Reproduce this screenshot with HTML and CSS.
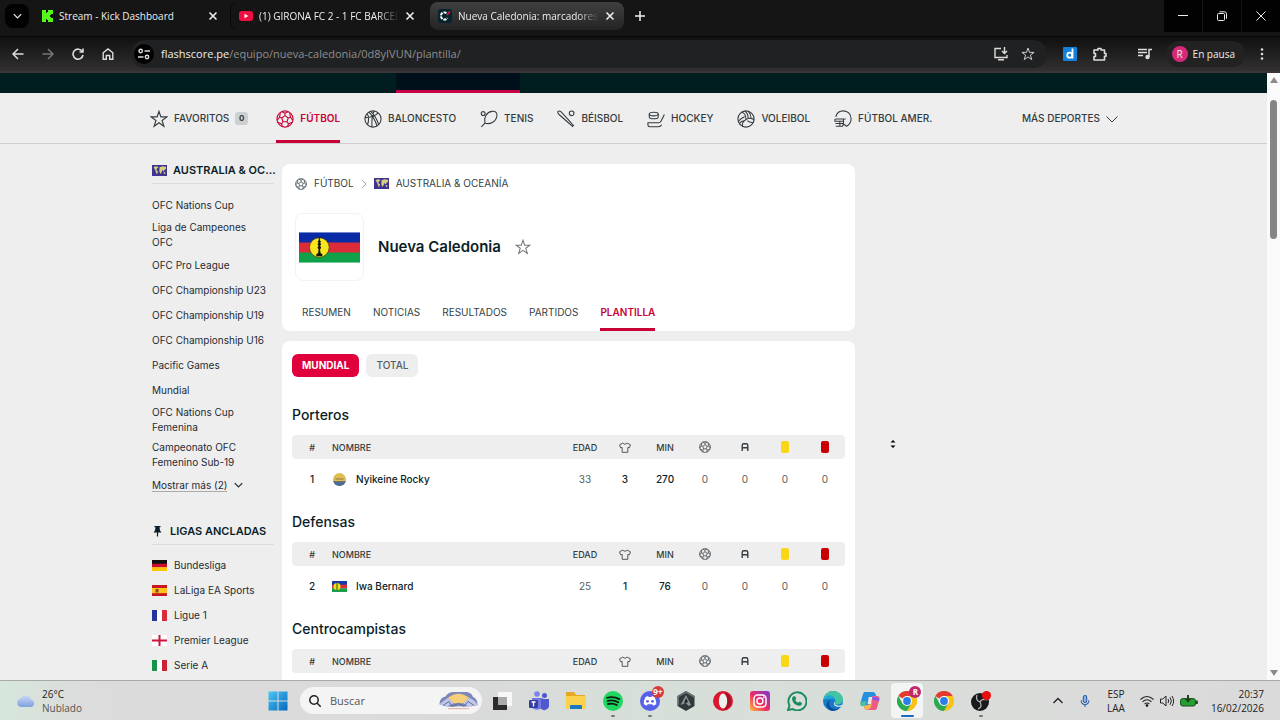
FILE: index.html
```html
<!DOCTYPE html>
<html lang="es">
<head>
<meta charset="utf-8">
<title>Nueva Caledonia: marcadores en directo</title>
<link rel="stylesheet" href="styles.css">
</head>
<body>
<svg class="defs" aria-hidden="true">
  <symbol id="ball" viewBox="0 0 20 20"><g fill="none" stroke="currentColor" stroke-width="1.2" stroke-linejoin="round"><circle cx="10" cy="10" r="9"/><path d="M10 6.300l3.600 2.600-1.400 4.200H7.800L6.400 8.900zM10 6.300V3.700M13.600 8.900l2.500-.8M12.200 13.100l1.600 2.200M7.800 13.100l-1.600 2.200M6.400 8.900l-2.500-.8M6.500 1.900L10 3.700l3.500-1.800M18.700 11.600l-2.600-3.500-.9-4.700M18.300 13.500l-4.500 1.800-1 3.300M7.200 18.600l-1-3.300-4.500-1.800M1.300 11.600l2.600-3.500.900-4.700"/></g></symbol>
  <symbol id="basket" viewBox="0 0 20 20"><g fill="none" stroke="currentColor" stroke-width="1.2"><circle cx="10" cy="10" r="9"/><path d="M5.500 2.300C9 6 12.500 11 14.500 17.800M7.500 1.500C11 5 14.500 10 16.300 16.300M1.200 8.500C7 8.500 12.500 6.500 15.800 3.200M11.300 1.300C9.500 4 8.500 10 8.800 18.800M3.500 4.200c1.800 2.500 2.300 6.500.4 12.300"/></g></symbol>
  <symbol id="tennis" viewBox="0 0 20 20"><g fill="none" stroke="currentColor" stroke-width="1.200"><circle cx="3.500" cy="4" r="2.200"/><path d="M5.500 14.500C3.800 9 7 2.500 13 1.500c4.500-.7 6.500 2 5.700 6C17.500 13 11 16.500 5.500 14.500zM5.500 14.500L1.500 18.700"/></g></symbol>
  <symbol id="bat" viewBox="0 0 20 20"><g fill="none" stroke="currentColor" stroke-width="1.200" stroke-linejoin="round"><circle cx="16.300" cy="3.700" r="2.600"/><path d="M1.300 1.500c1-.8 2.200-.4 3.300.6l8.200 8.900 5.300 6.200-.8.900-6.200-5.300L2 4.700C.9 3.500.6 2.300 1.300 1.500zM18.700 16.500l-2 2.200"/></g></symbol>
  <symbol id="hockey" viewBox="0 0 20 20"><g fill="none" stroke="currentColor" stroke-width="1.200" stroke-linejoin="round"><ellipse cx="7.500" cy="4.500" rx="5" ry="2"/><path d="M2.500 4.500v3.200c0 2.700 10 2.700 10 0V4.500M19.300 5l-3.800 7.500c-.6 1.200-1.300 1.700-2.600 1.700H1v2.300C1 18 2 18.700 3 18.700h9.500c2 0 3-.6 3.800-2.200"/></g></symbol>
  <symbol id="volley" viewBox="0 0 20 20"><g fill="none" stroke="currentColor" stroke-width="1.200"><circle cx="10" cy="10" r="9"/><path d="M10 10.500c0-4-2-7.500-5.300-8.300M10 10.500c3.500-2 8-1.500 9 1M10 10.500c-3.500 2-5 5.500-3.500 8M12.300 9.600c.2-3.500-1-6.800-3.800-8.500M11.500 12c3 2 5.500 2 7 1.500M7.500 12c-2.800 1-4.800 2.500-5 4M15.500 9c0-3-1-5.500-3-7.800M8.500 7.500C5 9 2 11.500 1.500 13.500"/></g></symbol>
  <symbol id="helmet" viewBox="0 0 20 20"><g fill="none" stroke="currentColor" stroke-width="1.200" stroke-linejoin="round"><path d="M2 7.500C3 3.500 6.500 1 10.500 1c5 0 8.500 4 8.500 8.800 0 3.700-2 6.700-5 8.200l-3.500-2.500V10H1.500M1 10v2.500h9.500M1.500 15h9M2 18h7.500l1-2.500M6.500 12.500V18M13 10h-2.500"/></g></symbol>
  <symbol id="star" viewBox="0 0 20 20"><path d="M10 1.500l2.100 6.200h6.600l-5.300 3.900 2 6.400L10 14.200 4.600 18l2-6.400L1.300 7.700h6.600z" fill="none" stroke="currentColor" stroke-width="1.300"/></symbol>
  <symbol id="shirt" viewBox="0 0 20 18"><path d="M6.500 1.500L1 4.500l1.500 4.800L5.300 9v8h9.400V9l2.800.3L19 4.500l-5.500-3c-1 2.700-6 2.700-7 0z" fill="none" stroke="currentColor" stroke-width="1.400" stroke-linejoin="round"/></symbol>
  <symbol id="assist" viewBox="0 0 10 10"><path d="M1.500 10V3c0-1.300.6-2 2-2h3c1.400 0 2 .7 2 2v7M1.500 6h7" fill="none" stroke="currentColor" stroke-width="1.700"/></symbol>
  <symbol id="x" viewBox="0 0 10 10"><path d="M1.500 1.500l7 7M8.500 1.500l-7 7" fill="none" stroke="currentColor" stroke-width="1.600"/></symbol>
  <symbol id="down" viewBox="0 0 12 8"><path d="M1 1.500l5 5 5-5" fill="none" stroke="currentColor" stroke-width="1.600"/></symbol>
  <symbol id="world" viewBox="0 0 15 11"><path fill="#3f3394" d="M0 0h15v11H0z"/><path fill="#d8cf7a" d="M1.500 2l3-.7 2 .7L5 3.500 4.300 5 6 6.500 5 9.500l-1-2L3.200 5zM7.500 2.300l3-1 3.400.5.300 1.700-1.700 1.500-1 1.500-1.300-1.500-.7 2.500-1 1.500-1.300-3L7.500 4.500zM11.700 7l1.500.2.300 1.500h-1.700z"/></symbol>
  <symbol id="nc" viewBox="0 0 60 30"><path fill="#0a2ba6" d="M0 0h60v11H0z"/><path fill="#dd2c39" d="M0 10h60v11H0z"/><path fill="#0fa04a" d="M0 20h60v10H0z"/><circle cx="20" cy="15" r="9.700" fill="#f7e51d" stroke="#2b2a14" stroke-width=".6"/><path fill="#15180f" d="M19.600 5h.8l.3 3 1 1.300-.9 1 1 1.500-1 1.500 1 2-1.100 1.700.5 3.300 1.800 1.300v2h-6v-2l1.800-1.300.5-3.300-1.100-1.700 1-2-1-1.500 1-1.500-.9-1 1-1.300z"/></symbol>
  <symbol id="chrome" viewBox="0 0 20 20"><path fill="#e33b2e" d="M1.300 5A10 10 0 0118.700 5H10v5z"/><path fill="#fbc116" d="M18.700 5A10 10 0 0110 20l4.300-7.500L10 5z"/><path fill="#2da94f" d="M1.300 5A10 10 0 0010 20l4.300-7.500H5.700z"/><circle cx="10" cy="10" r="5" fill="#fff"/><circle cx="10" cy="10" r="3.900" fill="#2b7de9"/></symbol>
</svg>

<header class="tabstrip">
  <button class="tab-search" aria-label="Buscar pestañas"><svg class="chev"><use href="#down"/></svg></button>
  <div class="tab">
    <svg class="i12" viewBox="0 0 12 12"><path fill="#53fc18" d="M1 0h4v3h1V2h1V0h5v4h-2v1H9v2h1v1h2v4H7v-2H6V9H5v3H1z"/></svg>
    <span class="tab-title">Stream - Kick Dashboard</span>
    <button class="close" aria-label="Cerrar"><svg class="i10"><use href="#x"/></svg></button>
  </div>
  <div class="tab divided">
    <svg class="i14" viewBox="0 0 14 14"><rect y="2" width="14" height="10" rx="3" fill="#f0103f"/><path fill="#fff" d="M5.500 4.800L9.300 7 5.500 9.200z"/></svg>
    <span class="tab-title fade">(1) GIRONA FC 2 - 1 FC BARCEL</span>
    <button class="close" aria-label="Cerrar"><svg class="i10"><use href="#x"/></svg></button>
  </div>
  <div class="tab active">
    <svg class="i14" viewBox="0 0 14 14"><rect width="14" height="14" rx="3" fill="#06242b"/><path d="M8.500 4A3.600 3.600 0 109.500 9" fill="none" stroke="#fff" stroke-width="2" stroke-dasharray="3 1"/><path d="M9 6l3-3.500" stroke="#f0104f" stroke-width="1.500"/></svg>
    <span class="tab-title fade">Nueva Caledonia: marcadores e</span>
    <button class="close" aria-label="Cerrar"><svg class="i10"><use href="#x"/></svg></button>
  </div>
  <button class="new-tab" aria-label="Nueva pestaña"><svg class="i10" viewBox="0 0 10 10"><path d="M5 0v10M0 5h10" stroke="currentColor" stroke-width="1.500"/></svg></button>
  <div class="window-buttons">
    <button aria-label="Minimizar"><svg class="i10" viewBox="0 0 10 10"><path d="M0 4.500h10" stroke="currentColor"/></svg></button>
    <button aria-label="Restaurar"><svg class="i10" viewBox="0 0 10 10"><path d="M.5 3.500q0-1 1-1h5q1 0 1 1v5q0 1-1 1h-5q-1 0-1-1zM2.500.8h5q2 0 2 2v5" fill="none" stroke="currentColor"/></svg></button>
    <button aria-label="Cerrar ventana"><svg class="i10" viewBox="0 0 10 10"><path d="M.5.500l9 9M9.500.500l-9 9" stroke="currentColor"/></svg></button>
  </div>
</header>

<nav class="toolbar" aria-label="Navegador">
  <div class="nav-buttons">
    <button aria-label="Atrás"><svg class="i12" viewBox="0 0 12 12"><path d="M11.500 6H1M6 1L1 6l5 5" fill="none" stroke="currentColor" stroke-width="1.500"/></svg></button>
    <button class="dim" aria-label="Adelante"><svg class="i12" viewBox="0 0 12 12"><path d="M.5 6H11M6 1l5 5-5 5" fill="none" stroke="currentColor" stroke-width="1.500"/></svg></button>
    <button aria-label="Recargar"><svg class="i12" viewBox="0 0 12 12"><path d="M10.300 3.500A5 5 0 1011 7M11 .5V4H7.500" fill="none" stroke="currentColor" stroke-width="1.600"/></svg></button>
    <button aria-label="Inicio"><svg class="i12" viewBox="0 0 12 12"><path d="M1.200 4.800L6 1l4.800 3.800v6.500H7.700V7.500H4.300v3.800H1.200z" fill="none" stroke="currentColor" stroke-width="1.400"/></svg></button>
  </div>
  <div class="omnibox">
    <button class="site-info" aria-label="Información del sitio"><svg class="i12" viewBox="0 0 12 12"><g fill="none" stroke="currentColor" stroke-width="1.400"><circle cx="2.700" cy="3" r="1.700"/><path d="M6.500 3H12M0 9h5.500"/><circle cx="9" cy="9" r="1.700"/></g></svg></button>
    <div class="url">flashscore.pe<span>/equipo/nueva-caledonia/0d8yIVUN/plantilla/</span></div>
    <button aria-label="Instalar"><svg class="i14" viewBox="0 0 14 14"><path d="M7 1.500H1v9h12V8M4 12.700h6M10.500 0v6M8 4l2.500 2.500L13 4" fill="none" stroke="currentColor" stroke-width="1.400"/></svg></button>
    <button aria-label="Marcar página"><svg class="i14"><use href="#star"/></svg></button>
  </div>
  <div class="extensions">
    <button aria-label="Extensión d"><svg class="i14" viewBox="0 0 14 14"><rect width="14" height="14" rx="1" fill="#1480dd"/><circle cx="6.700" cy="8.200" r="2.500" fill="none" stroke="#fff" stroke-width="1.800"/><path d="M9.500 1.500v10" stroke="#fff" stroke-width="1.800"/></svg></button>
    <button aria-label="Extensiones"><svg class="i14" viewBox="0 0 14 14"><path d="M1 3h4V1.500h3V3h3.500v3.500H13v2.700h-1.500V13H1V9.500h1.500v-3H1z" fill="none" stroke="currentColor" stroke-width="1.600" stroke-linejoin="round"/></svg></button>
    <button class="media" aria-label="Multimedia"><svg class="i14" viewBox="0 0 14 14"><path d="M0 2.500h9M0 5.500h9M0 8.500h5M11 10V2.500h3" fill="none" stroke="currentColor" stroke-width="1.500"/><circle cx="9.500" cy="10" r="2.200" fill="currentColor"/></svg></button>
    <button class="profile"><span class="avatar">R</span>En pausa</button>
    <button aria-label="Menú"><svg class="i14" viewBox="0 0 14 14" fill="currentColor"><circle cx="7" cy="2.500" r="1.300"/><circle cx="7" cy="7" r="1.300"/><circle cx="7" cy="11.500" r="1.300"/></svg></button>
  </div>
</nav>

<div class="viewport">
  <div class="page">
    <div class="site-header"><div class="site-tab"></div></div>
    <nav class="sports" aria-label="Deportes">
      <div class="sports-inner">
        <a href="#" class="favorites"><svg class="i18"><use href="#star"/></svg>FAVORITOS<span class="count">0</span></a>
        <a href="#" class="current"><svg class="i18"><use href="#ball"/></svg>FÚTBOL</a>
        <a href="#"><svg class="i18"><use href="#basket"/></svg>BALONCESTO</a>
        <a href="#"><svg class="i18"><use href="#tennis"/></svg>TENIS</a>
        <a href="#"><svg class="i18"><use href="#bat"/></svg>BÉISBOL</a>
        <a href="#"><svg class="i18"><use href="#hockey"/></svg>HOCKEY</a>
        <a href="#"><svg class="i18"><use href="#volley"/></svg>VOLEIBOL</a>
        <a href="#"><svg class="i18"><use href="#helmet"/></svg>FÚTBOL AMER.</a>
        <button class="more-sports">MÁS DEPORTES<svg class="i12" viewBox="0 0 12 12"><path d="M.5 3.500L6 9l5.500-5.500" fill="none" stroke="currentColor"/></svg></button>
      </div>
    </nav>
    <div class="columns">
      <aside class="sidebar">
        <h2><svg class="flag"><use href="#world"/></svg>AUSTRALIA &amp; OC...</h2>
        <ul class="leagues">
          <li><a href="#">OFC Nations Cup</a></li>
          <li><a href="#">Liga de Campeones<br>OFC</a></li>
          <li><a href="#">OFC Pro League</a></li>
          <li><a href="#">OFC Championship U23</a></li>
          <li><a href="#">OFC Championship U19</a></li>
          <li><a href="#">OFC Championship U16</a></li>
          <li><a href="#">Pacific Games</a></li>
          <li><a href="#">Mundial</a></li>
          <li><a href="#">OFC Nations Cup<br>Femenina</a></li>
          <li><a href="#">Campeonato OFC<br>Femenino Sub-19</a></li>
          <li><button class="show-more"><span>Mostrar más (2)</span><svg class="chev"><use href="#down"/></svg></button></li>
        </ul>
        <h2 class="pinned"><svg class="pin" viewBox="0 0 10 12"><path fill="currentColor" d="M2 1h6v1.300H7L7.500 5.500l1.500 2H5.600V11.500H4.400V7.500H1l1.500-2L3 2.300H2z"/></svg>LIGAS ANCLADAS</h2>
        <ul class="leagues">
          <li><a href="#"><svg class="flag" viewBox="0 0 15 11"><path fill="#111" d="M0 0h15v4H0z"/><path fill="#c8102e" d="M0 3.700h15v3.800H0z"/><path fill="#ffc400" d="M0 7.300h15V11H0z"/></svg>Bundesliga</a></li>
          <li><a href="#"><svg class="flag" viewBox="0 0 15 11"><path fill="#c81521" d="M0 0h15v11H0z"/><path fill="#fbc51c" d="M0 3h15v5.200H0z"/><path fill="#8e4724" d="M3.500 4h3v3.500h-3z"/></svg>LaLiga EA Sports</a></li>
          <li><a href="#"><svg class="flag" viewBox="0 0 15 11"><path fill="#fff" d="M0 0h15v11H0z"/><path fill="#23369b" d="M0 0h5v11H0z"/><path fill="#dc2a3c" d="M10 0h5v11h-5z"/></svg>Ligue 1</a></li>
          <li><a href="#"><svg class="flag" viewBox="0 0 15 11"><path fill="#fff" d="M0 0h15v11H0z"/><path fill="#ce1238" d="M6.500 0h2v11h-2zM0 4.500h15v2H0z"/></svg>Premier League</a></li>
          <li><a href="#"><svg class="flag" viewBox="0 0 15 11"><path fill="#fff" d="M0 0h15v11H0z"/><path fill="#159449" d="M0 0h5v11H0z"/><path fill="#cc2238" d="M10 0h5v11h-5z"/></svg>Serie A</a></li>
        </ul>
      </aside>
      <main class="main">
        <section class="card">
          <div class="breadcrumb">
            <a href="#"><svg class="i12"><use href="#ball"/></svg>FÚTBOL</a>
            <svg class="sep" viewBox="0 0 6 10"><path d="M.8.800L5 5 .8 9.200" fill="none" stroke="#aaa"/></svg>
            <a href="#"><svg class="flag"><use href="#world"/></svg>AUSTRALIA &amp; OCEANÍA</a>
          </div>
          <div class="team">
            <div class="crest"><svg viewBox="0 0 60 30"><use href="#nc"/></svg></div>
            <h1>Nueva Caledonia</h1>
            <button class="fav" aria-label="Añadir a favoritos"><svg class="i18"><use href="#star"/></svg></button>
          </div>
          <nav class="team-tabs" aria-label="Equipo">
            <a href="#">RESUMEN</a><a href="#">NOTICIAS</a><a href="#">RESULTADOS</a><a href="#">PARTIDOS</a><a href="#" class="current">PLANTILLA</a>
          </nav>
        </section>
        <section class="card squad">
          <div class="filters"><button class="on">MUNDIAL</button><button>TOTAL</button></div>
          <h3>Porteros</h3>
          <table>
            <thead><tr><th class="num">#</th><th class="name">NOMBRE</th><th>EDAD</th><th><svg class="shirt"><use href="#shirt"/></svg></th><th>MIN</th><th><svg class="i12"><use href="#ball"/></svg></th><th><svg class="assist"><use href="#assist"/></svg></th><th><i class="booking yellow"></i></th><th><i class="booking red"></i></th></tr></thead>
            <tbody><tr><td class="num">1</td><td class="name"><div><svg class="emblem" viewBox="0 0 15 13"><circle cx="7.500" cy="6.500" r="6.500" fill="#dfbd4e"/><path fill="#426b9f" d="M1.200 8h12.600a6.500 6.500 0 01-12.600 0z"/><path d="M3.500 6h8M2.500 8.800h10" stroke="#8a7650"/></svg><a href="#">Nyikeine Rocky</a></div></td><td>33</td><td class="strong">3</td><td class="strong">270</td><td>0</td><td>0</td><td>0</td><td>0</td></tr></tbody>
          </table>
          <h3>Defensas</h3>
          <table>
            <thead><tr><th class="num">#</th><th class="name">NOMBRE</th><th>EDAD</th><th><svg class="shirt"><use href="#shirt"/></svg></th><th>MIN</th><th><svg class="i12"><use href="#ball"/></svg></th><th><svg class="assist"><use href="#assist"/></svg></th><th><i class="booking yellow"></i></th><th><i class="booking red"></i></th></tr></thead>
            <tbody><tr><td class="num">2</td><td class="name"><div><svg class="flag" viewBox="0 0 15 11"><path fill="#1b3aa5" d="M0 0h15v4H0z"/><path fill="#d93338" d="M0 3.700h15v3.800H0z"/><path fill="#1d9c49" d="M0 7.300h15V11H0z"/><circle cx="5" cy="5.500" r="3.500" fill="#ebe31f"/><path d="M5 2v7" stroke="#35520f"/></svg><a href="#">Iwa Bernard</a></div></td><td>25</td><td class="strong">1</td><td class="strong">76</td><td>0</td><td>0</td><td>0</td><td>0</td></tr></tbody>
          </table>
          <h3>Centrocampistas</h3>
          <table>
            <thead><tr><th class="num">#</th><th class="name">NOMBRE</th><th>EDAD</th><th><svg class="shirt"><use href="#shirt"/></svg></th><th>MIN</th><th><svg class="i12"><use href="#ball"/></svg></th><th><svg class="assist"><use href="#assist"/></svg></th><th><i class="booking yellow"></i></th><th><i class="booking red"></i></th></tr></thead>
          </table>
        </section>
      </main>
    </div>
  </div>
  <div class="scrollbar"><svg viewBox="0 0 8 6"><path fill="#8a8a8a" d="M4 0l4 6H0z"/></svg><div class="thumb"></div><svg viewBox="0 0 8 6"><path fill="#8a8a8a" d="M4 6L0 0h8z"/></svg></div>
  <svg class="scroll-cursor" viewBox="0 0 6 10"><path d="M3 1l2.500 2.500h-5zM3 9L.5 6.500h5z"/></svg>
</div>

<footer class="taskbar">
  <button class="weather"><svg viewBox="0 0 20 14"><defs><linearGradient id="cl" x2="0" y2="1"><stop stop-color="#c7d9f6"/><stop offset="1" stop-color="#7f9fe0"/></linearGradient></defs><path fill="url(#cl)" d="M5 13a4.200 4.200 0 01-.3-8.300A5.500 5.500 0 0115 5.500 3.900 3.900 0 0115.500 13z"/></svg><span>26°C<br><em>Nublado</em></span></button>
  <button class="start" aria-label="Inicio"><svg class="i20" viewBox="0 0 20 20"><defs><linearGradient id="wn" x2="1" y2="1"><stop stop-color="#4cc8f4"/><stop offset="1" stop-color="#0567bd"/></linearGradient></defs><path fill="url(#wn)" d="M.5.500h9v9h-9zM10.500.500h9v9h-9zM.5 10.500h9v9h-9zM10.500 10.500h9v9h-9z"/></svg></button>
  <label class="search"><svg class="i12" viewBox="0 0 12 12"><circle cx="5" cy="5" r="4.200" fill="none" stroke="#222" stroke-width="1.500"/><path d="M8 8l3.800 3.800" stroke="#222" stroke-width="1.500"/></svg><input type="text" placeholder="Buscar" aria-label="Buscar"><svg class="art" viewBox="0 0 42 22"><path fill="#7d88ba" d="M1 15Q1 8 7 7q3-5 9-5h14q5 1 6 5 5 2 5 9-9 2-20 1-12 2-20-2z"/><path fill="#f7cf79" d="M10 8q11-8 22 0l-6 6H16z"/><path fill="#c3c8e8" d="M1 15q5-4 9-7l6 6-7 3zM32 8q7 3 9 8l-10 1-5-3z"/><path fill="none" stroke="#596a9c" d="M5 16l6-4 3 5 7-3 6 3 4-5 6 4"/><path stroke="#e3a9a4" d="M10 19.500h22"/></svg></label>
  <div class="apps">
    <button aria-label="Vista de tareas"><svg class="i20" viewBox="0 0 20 20"><path fill="#f7f7f7" d="M6 1h14v14H6z"/><path fill="#2b2b2b" d="M1 6h5v8h9v5H1z"/><path fill="#aaa" d="M6 6h9v8H6z"/></svg></button>
    <button aria-label="Teams"><svg class="i20" viewBox="0 0 20 20"><circle cx="8" cy="3" r="2.800" fill="#7d83ee"/><circle cx="15.500" cy="4.500" r="2.500" fill="#5159c9"/><path fill="#7077e3" d="M3 7h11v9q-5 5-11 1z"/><path fill="#5058cb" d="M12 8h8v8q-3 5-8 2z"/><rect y="9" width="9" height="8" rx="1" fill="#353da4"/><path d="M2.500 11h4M4.500 11v4.500" stroke="#fff" stroke-width="1.300"/></svg></button>
    <button aria-label="Explorador"><svg class="i20" viewBox="0 0 20 20"><path fill="#e5a921" d="M0 1h8l2 3h9v5H0z"/><rect y="5" width="20" height="13" rx="1" fill="#fbd14e"/><path fill="#1879bd" d="M4 18v-3q0-1 1-1h10q1 0 1 1v3z"/></svg></button>
    <button class="running" aria-label="Spotify"><svg class="i20" viewBox="0 0 20 20"><circle cx="10" cy="10" r="10" fill="#1ed760"/><path d="M4 6.800q6.500-1.800 12.300 1.300M4.500 10q5.800-1.500 10.600 1.200M5 13q5-1.200 8.800 1" fill="none" stroke="#0b1b10" stroke-width="1.800" stroke-linecap="round"/></svg></button>
    <button class="running" aria-label="Discord"><svg class="i20" viewBox="0 0 20 20"><circle cx="10" cy="10" r="10" fill="#5661ea"/><path fill="#fff" d="M5.500 6l2.500-1 .7 1h2.600l.7-1 2.500 1q2 3.700 1.800 7.200l-3 1.500-1-1.500H7.700l-1 1.500-3-1.500Q3.500 9.700 5.500 6z"/><circle cx="7.500" cy="10.300" r="1.400" fill="#5661ea"/><circle cx="12.500" cy="10.300" r="1.400" fill="#5661ea"/></svg><b class="badge">9+</b></button>
    <button aria-label="Armoury"><svg class="i20" viewBox="0 0 20 20"><path fill="#33383a" d="M10 0l8.500 5v10L10 20l-8.500-5V5z"/><path fill="#687173" d="M10 0l8.500 5v2L10 2 3 6v8l-1.500 1V5z"/><path fill="#8b9496" d="M10 4l5 10-2.500 1L10 12l-5.500 2z"/><path fill="#1c2021" d="M10 7l2 4-4 1.500z"/></svg></button>
    <button aria-label="Opera"><svg class="i20" viewBox="0 0 20 20"><circle cx="10" cy="10" r="10" fill="#db1630"/><path fill="#a81226" d="M12 1q6 3 6 9t-6 9z"/><ellipse cx="10" cy="10" rx="4.200" ry="7.500" fill="#edf0ed"/></svg></button>
    <button aria-label="Instagram"><svg class="i20" viewBox="0 0 20 20"><defs><linearGradient id="ig" x1="0" y1="1" x2="1" y2="0"><stop stop-color="#ffbd3e"/><stop offset=".45" stop-color="#f02c60"/><stop offset="1" stop-color="#7839d5"/></linearGradient></defs><rect width="20" height="20" rx="3" fill="url(#ig)"/><g fill="none" stroke="#fff" stroke-width="1.500"><rect x="4" y="4" width="12" height="12" rx="3.500"/><circle cx="10" cy="10" r="3"/></g><circle cx="13.700" cy="6.300" r=".9" fill="#fff"/></svg></button>
    <button aria-label="WhatsApp"><svg class="i20" viewBox="0 0 20 20"><path d="M1 19l1.500-4.500A9 9 0 115.800 18z" fill="none" stroke="#198c5d" stroke-width="1.900"/><path fill="#198c5d" d="M6.500 5.200h1.700l1 2.500-1 1.200q1 2 3 2.900l1.200-1.300 2.400 1.200v1.500q-1 1.800-3 1.500-5.500-1-6.800-6.500-.2-2 1.500-3z"/></svg></button>
    <button aria-label="Edge"><svg class="i20" viewBox="0 0 20 20"><circle cx="10" cy="10" r="10" fill="#167bc7"/><path fill="#43c5a1" d="M.3 9Q2 0 10.500 0 20 1 20 9.500q-1 4-6 4-3-.5-1.500-3Q12 6 8 6 3 6 .3 9z"/><path fill="#20a7da" d="M.3 9Q3 3 8.500 4.500 13 6 12.500 10.500 11 6.500 7.500 8 1 8 .3 9z"/><path fill="#0c4b95" d="M7 9q-3 8 5 9.300 3 0 5-2-4 5-10 3-7-6 0-10.300z"/><path fill="#e5eaea" d="M12.500 10.500q-2 3 2 4 3 .5 5-1l-1 2q-5 1-7-1-1.500-2.500 1-4z"/></svg></button>
    <button aria-label="Copilot"><svg class="i20" viewBox="0 0 20 20"><path fill="#258fdf" d="M5 1h8q2 0 2.500 2l1 3h-5L8 15H3q-3 0-2.500-3L3 3q.5-2 2-2z"/><path fill="#f05b82" d="M15 19H7q-2 0-2.500-2l-1-3h5L12 5h5q3 0 2.500 3L17 17q-.5 2-2 2z"/><path fill="#f3b84b" d="M4 14h5l3-2-1.500 5-3 2q-2 0-3-2z"/><path fill="#8b56dd" d="M11 6h6q3 1 2 4l-6-1z"/><path fill="#4ec19a" d="M.5 11l6-1L5 15q-6 1-4.500-4z"/><path fill="#e6e7e6" d="M8.800 6h3.500L11 13H7.500z"/></svg></button>
    <button class="running focused" aria-label="Chrome, perfil R"><svg class="i20"><use href="#chrome"/></svg><b class="badge pink">R</b></button>
    <button aria-label="Chrome"><svg class="i20"><use href="#chrome"/></svg></button>
    <button class="running" aria-label="OBS"><svg class="i20" viewBox="0 0 20 20"><circle cx="9" cy="11" r="9" fill="#17191b"/><g fill="none" stroke="#b7bcbc" stroke-width="1.200"><path d="M6 4q-2 5 3 7M16 9q-5-2-7 2M7 18q5-2 2-7"/></g><circle cx="15.500" cy="4.500" r="4.500" fill="#ee0b0b"/></svg></button>
  </div>
  <div class="tray">
    <svg class="i12" viewBox="0 0 12 12"><path d="M1.500 8L6 3.500 10.500 8" fill="none" stroke="#222" stroke-width="1.300"/></svg>
    <svg class="i12" viewBox="0 0 12 14"><g fill="none" stroke="#225cad" stroke-width="1.200"><rect x="4" y=".7" width="4" height="8" rx="2" fill="#8eb2df"/><path d="M1.500 6q0 5 4.500 5t4.500-5M6 11v3"/></g></svg>
    <span class="lang">ESP<br>LAA</span>
    <div class="status">
      <svg class="i14" viewBox="0 0 14 14"><g fill="none" stroke="#222" stroke-width="1.100"><path d="M.5 5.500q6.500-6 13 0M2.500 7.800q4.500-4 9 0M4.600 10q2.400-2 4.800 0"/></g><circle cx="7" cy="11.500" r="1.200"/></svg>
      <svg class="i14" viewBox="0 0 14 14"><g fill="none" stroke="#222"><path d="M.5 5h2.300L6 2v10L2.800 9H.5zM8 5q1.500 2 0 4M10 3.300q2.800 3.700 0 7.400M12 2q3.300 5 0 10"/></g></svg>
      <svg class="battery" viewBox="0 0 18 12"><rect x=".6" y="3.600" width="14.800" height="7.400" rx="2" fill="#23a12f" stroke="#1e4422"/><path fill="#1e4422" d="M16 5.500h1.800v3.500H16zM7 0h2v4h2L8 8 5 4h2z"/></svg>
    </div>
    <span class="clock">20:37<br>16/02/2026</span>
  </div>
</footer>
</body>
</html>
```
FILE: styles.css
```css
* { box-sizing: border-box; }
body { margin: 0; height: 100vh; display: flex; flex-direction: column; overflow: hidden; background: #eee; color: #0b1e28; font: 10px/15px Inter, sans-serif; }
a { color: inherit; text-decoration: none; }
button { border: 0; padding: 0; background: none; color: inherit; font: inherit; display: flex; align-items: center; justify-content: center; }
svg { display: block; flex: none; }
h1, h2, h3, ul { margin: 0; padding: 0; }
ul { list-style: none; }
.defs { position: absolute; width: 0; height: 0; }
.i10 { width: 10px; height: 10px; }
.i12 { width: 12px; height: 12px; }
.i14 { width: 14px; height: 14px; }
.i18 { width: 18px; height: 18px; }
.i20 { width: 20px; height: 20px; }
.flag { width: 15px; height: 11px; }
.emblem { width: 15px; height: 13px; }
.chev { width: 9px; height: 6px; }

.tabstrip { flex: none; height: 37px; display: flex; align-items: center; padding: 0 0 4px 5px; background: #151515; border-bottom: 1px solid #080808; color: #eee; font: 10px/16px "Open Sans", sans-serif; }
.tab-search { width: 24px; height: 24px; border-radius: 8px; background: #020202; }
.tab { width: 194px; height: 28px; margin-left: 4px; padding: 0 9px 0 8px; display: flex; align-items: center; gap: 6px; border-radius: 8px; }
.tab.divided { margin-left: 3px; border-left: 1px solid #080808; }
.tab.active { background: linear-gradient(#404040, #242424); margin-left: 6px; }
.tab-title { flex: 1; min-width: 0; white-space: nowrap; }
.fade { mask-image: linear-gradient(90deg, #000 85%, transparent); }
.new-tab { width: 24px; height: 24px; margin-left: 4px; }
.window-buttons { margin-left: auto; align-self: stretch; display: flex; gap: 1px; }
.window-buttons button { width: 38px; background: #020202; }

.toolbar { flex: none; height: 36px; display: flex; align-items: center; background: linear-gradient(#101010, #323030); color: #ddd; font: 11px/16px "Open Sans", sans-serif; border-bottom: 2px solid #393538; }
.nav-buttons { display: flex; gap: 6px; padding: 0 11px 0 6px; }
.nav-buttons button { width: 24px; height: 24px; }
.dim { color: #777; }
.omnibox { flex: 1; height: 28px; border-radius: 14px; background: #202122; display: flex; align-items: center; gap: 13px; padding: 0 12px 0 3px; }
.site-info { width: 20px; height: 20px; border-radius: 10px; background: #000; }
.url { flex: 1; margin-left: -6px; white-space: nowrap; color: #eee; }
.url span { color: #8f8f8f; }
.extensions { display: flex; align-items: center; gap: 16px; padding: 0 11px 0 16px; }
.media { margin-left: 15px; }
.profile { height: 26px; padding: 0 10px 0 6px; margin: 0 -6px 0 -2px; border-radius: 13px; background: #222; gap: 5px; color: #eee; font-size: 10px; }
.avatar { width: 16px; height: 16px; border-radius: 8px; background: #d62a78; }

.viewport { flex: 1; min-height: 0; display: flex; position: relative; overflow: hidden; }
.page { flex: 1; min-width: 0; }
.site-header { height: 20px; background: #001e20; padding-left: 396px; display: flex; }
.site-tab { width: 124px; background: #00101a; border-bottom: 3px solid #c80045; }
.sports { height: 51px; border-bottom: 1px solid #cfcfcf; color: #333b40; font-weight: 500; }
.sports-inner { max-width: 968px; margin-left: 150px; height: 100%; display: flex; gap: 24px; }
.sports a, .more-sports { display: flex; align-items: center; gap: 6px; border-bottom: 3px solid transparent; padding-top: 4px; white-space: nowrap; }
.sports .current { color: #c80037; border-color: #c80037; font-weight: 600; }
.sports .favorites { margin-right: 4px; }
.count { background: #ccd0d2; border-radius: 3px; width: 13px; line-height: 13px; text-align: center; font-size: 8px; font-weight: 700; }
.more-sports { margin-left: auto; }

.columns { display: flex; align-items: flex-start; gap: 8px; padding: 20px 0 0 152px; }
.sidebar { width: 122px; }
.sidebar h2 { height: 20px; padding-bottom: 7px; border-bottom: 1px solid #ddd; margin-bottom: 8px; display: flex; align-items: center; gap: 7px; font-size: 11px; font-weight: 600; white-space: nowrap; }
.sidebar .pinned { margin-top: 28px; margin-bottom: 7px; }
.sidebar h2:first-child { gap: 6px; }
.pin { width: 11px; height: 12px; }
.leagues a, .show-more { display: flex; align-items: center; gap: 7px; min-height: 25px; padding: 3px 0 2px; white-space: nowrap; color: #1f2b33; }
.show-more span { border-bottom: 1px solid #aaa; line-height: 12px; }

.main { flex: 1; min-width: 0; max-width: 573px; display: flex; flex-direction: column; gap: 10px; }
.card { background: #fff; border-radius: 8px; }
.breadcrumb { display: flex; align-items: center; gap: 7px; padding: 12px 13px 0; color: #333f46; }
.breadcrumb a { display: flex; align-items: center; gap: 7px; }
.sep { width: 6px; height: 10px; }
.team { display: flex; align-items: center; gap: 14px; padding: 22px 13px 0; }
.crest { width: 69px; height: 68px; border: 1px solid #f3f3f3; border-radius: 8px; display: flex; align-items: center; justify-content: center; }
.crest svg { width: 61px; height: 31px; }
h1 { font-size: 15px; line-height: 20px; font-weight: 600; }
.fav { color: #777; }
.fav svg { width: 16px; height: 16px; }
.team-tabs { display: flex; gap: 22px; padding: 12px 20px 0; margin-top: 10px; color: #333f46; }
.team-tabs a { padding: 2px 0 8px; border-bottom: 3px solid transparent; }
.team-tabs .current { color: #c80037; border-color: #c80037; font-weight: 600; }
.squad { padding: 13px 10px 20px; }
.filters { display: flex; gap: 7px; margin-bottom: 28px; }
.filters button { height: 23px; padding: 0 10px; border-radius: 6px; background: #eee; color: #555e62; font-weight: 500; }
.filters .on { background: #e0003c; color: #fff; font-weight: 700; }
h3 { font-size: 14px; line-height: 20px; font-weight: 500; margin-bottom: 10px; }
table { width: 100%; table-layout: fixed; border-collapse: collapse; margin-bottom: 13px; }
th, td { width: 40px; padding: 0; text-align: center; vertical-align: middle; }
th { height: 24px; background: #eee; font-size: 9px; font-weight: 500; color: #333b40; }
th:first-child { border-radius: 4px 0 0 4px; }
th:last-child { border-radius: 0 4px 4px 0; }
td { height: 40px; color: #555e62; }
th.name, td.name { width: auto; text-align: left; }
td.num, .strong { color: #0b1e28; font-weight: 500; }
.name div { display: flex; align-items: center; gap: 9px; font-weight: 500; color: #0b1e28; }
th svg { margin: auto; }
.shirt { width: 12px; height: 11px; }
.assist { width: 8px; height: 8px; }
.booking { display: block; width: 8px; height: 12px; margin: auto; border-radius: 2px; }
.yellow { background: #f9d616; }
.red { background: #c90000; }

.scrollbar { width: 13px; background: #fafafa; display: flex; flex-direction: column; align-items: center; padding: 4px 0; }
.scrollbar svg { width: 8px; height: 6px; }
.thumb { width: 7px; height: 139px; margin: 17px 0 auto; border-radius: 4px; background: #858585; }
.scroll-cursor { position: absolute; left: 890px; top: 366px; width: 6px; height: 10px; }

.taskbar { flex: none; height: 40px; display: flex; align-items: center; background: linear-gradient(90deg, #d6e7db, #dbdcdb 6%, #dadada 35%, #d7dfd9 50%, #dadcda 80%, #dadada); border-top: 1px solid #a8aaa8; font: 10px/14px "Open Sans", sans-serif; color: #222; }
.weather { width: 260px; padding-left: 16px; gap: 6px; justify-content: flex-start; text-align: left; }
.weather svg { width: 20px; height: 14px; }
.weather em { font-style: normal; color: #555; }
.start { width: 36px; }
.search { width: 182px; height: 27px; margin-left: 4px; padding: 0 3px 0 9px; border-radius: 14px; background: #f3f4f3; display: flex; align-items: center; gap: 9px; }
.search input { flex: 1; min-width: 0; border: 0; padding: 0; background: none; font: 11px/16px "Open Sans", sans-serif; color: #555; }
.search input::placeholder { color: #555; opacity: 1; }
.art { width: 41px; height: 21px; }
.apps { width: 515px; margin-left: 2px; align-self: stretch; display: grid; grid-template-columns: repeat(14, 1fr); padding: 2px 0; }
.apps button { position: relative; border-radius: 4px; }
.running::after { content: ""; position: absolute; bottom: 1px; left: 50%; width: 4px; height: 2px; margin-left: -2px; border-radius: 1px; background: #777; }
.focused { background: #f2f5f3; margin: 0 2px; }
.focused::after { width: 13px; margin-left: -6px; background: #176bc0; }
.badge { position: absolute; top: 3px; right: 4px; min-width: 12px; height: 12px; border-radius: 6px; background: #d8393f; color: #fff; font-size: 8px; line-height: 12px; }
.badge.pink { right: 2px; background: #c2276c; }
.tray { margin-left: auto; padding-right: 16px; display: flex; align-items: center; gap: 15px; }
.lang { text-align: center; margin-left: 1px; }
.status { display: flex; align-items: center; gap: 6px; }
.battery { width: 18px; height: 12px; }
.clock { text-align: right; margin-left: -2px; }
```
